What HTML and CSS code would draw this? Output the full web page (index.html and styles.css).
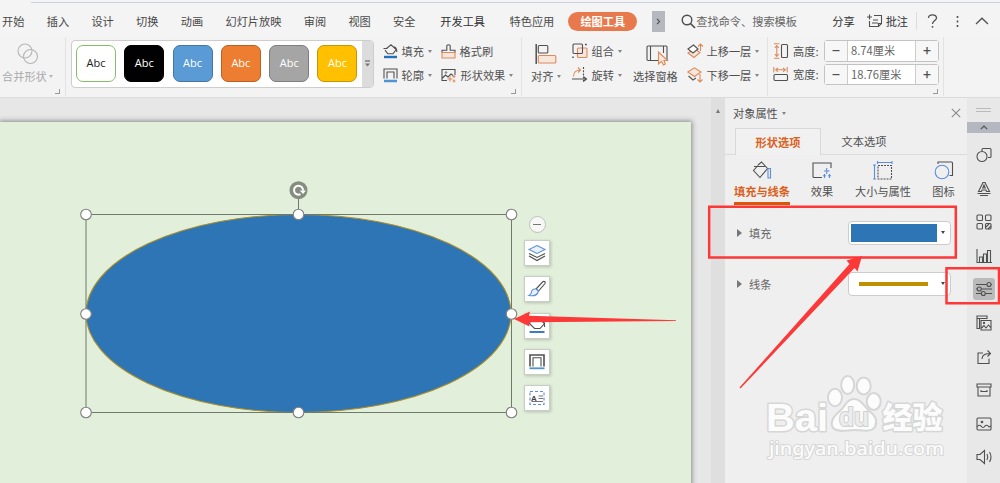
FILE: index.html
```
<!DOCTYPE html>
<html lang="zh-CN">
<head>
    <meta charset="UTF-8">
    <meta name="viewport" content="width=device-width, initial-scale=1.0">
    <title>绘图工具</title>
    <link rel="stylesheet" href="styles.css">
</head>
<body>
    <!-- Menu tabs -->
    <nav class="menu">
        <a>开始</a>
        <a>插入</a>
        <a>设计</a>
        <a>切换</a>
        <a>动画</a>
        <a>幻灯片放映</a>
        <a>审阅</a>
        <a>视图</a>
        <a>安全</a>
        <a class="dev strong">开发工具</a>
        <a class="special">特色应用</a>
        <a class="active">绘图工具</a>
        <span class="more"><svg width="5" height="7"><path d="M1 .8 3.6 3.5 1 6.2"/></svg></span>
        <div class="search">
            <svg width="15" height="15"><circle cx="6" cy="6" r="4.8" stroke-width="1.4"/><path d="M9.5 9.5 14 14" stroke-width="1.7"/></svg>
            <span>查找命令、搜索模板</span>
        </div>
        <a class="share strong">分享</a>
        <svg class="note-icon" width="16" height="14"><path d="M7 1.5H14.5V9.5L11.5 12.5H2.5V7M6 6H11M5 9H11M0 3H5M2.5 .5V5.5M11.5 12.5V9.5H14.5"/></svg>
        <a class="strong">批注</a>
        <i class="menu-line"></i>
        <svg class="help" width="11" height="14"><path d="M1.5 4C1.5-.3 9.5-.3 9.5 4 9.5 6.5 5.5 6.6 5.5 10" stroke-width="1.3"/><path d="M5.5 12V13.7" stroke-width="1.5"/></svg>
        <svg class="dots" width="3" height="13"><path d="M1.5 1V3M1.5 5.5V7.5M1.5 10V12" stroke-width="1.6"/></svg>
        <svg class="fold" width="14" height="8"><path d="M1 7 7 1.2 13 7" stroke-width="1.3"/></svg>
    </nav>

    <!-- Ribbon -->
    <div class="ribbon">
        <div class="group merge">
            <svg width="22" height="22"><circle cx="8" cy="8" r="7"/><circle cx="13.5" cy="13.5" r="7"/></svg>
            <span>合并形状<b class="caret"></b></span>
            <i class="corner"></i>
        </div>

        <div class="group styles">
            <div class="gallery">
                <div class="swatch outline">Abc</div>
                <div class="swatch black">Abc</div>
                <div class="swatch blue">Abc</div>
                <div class="swatch orange">Abc</div>
                <div class="swatch gray">Abc</div>
                <div class="swatch yellow">Abc</div>
                <div class="gallery-more"><svg width="5" height="8"><path d="M0 1H5" stroke-width="1"/><path class="solid" d="M0 3.5H5L2.5 6.5Z"/></svg></div>
            </div>
            <div class="tools">
                <div class="tool">
                    <svg width="15" height="15"><path d="M3.5 4.5 8 .8 13.2 5.5 10 9.8H4.8L2 6.2M.5 4.5H4.5M11 2.8Q14 4 13.8 8"/><path class="s-blue" d="M1 13H14" stroke-width="2.4"/></svg>
                    <span>填充<b class="caret"></b></span>
                </div>
                <div class="tool">
                    <svg width="15" height="15"><path d="M1 8.5V6.3H5.8V1.8Q5.8 .8 7.5 .8T9.2 1.8V6.3H14V8.5"/><path class="s-orange f-orange" d="M1 8.5H14V14H1Z"/></svg>
                    <span>格式刷</span>
                </div>
                <div class="tool">
                    <svg width="15" height="15"><path d="M1 10.5V1H14V10.5M4 10.5V4H11V10.5"/><path class="s-light" d="M1 13H14" stroke-width="2.5"/></svg>
                    <span>轮廓<b class="caret"></b></span>
                </div>
                <div class="tool">
                    <svg width="16" height="15"><path d="M6 12.5H1V1.5H14V7M1.5 10 4.5 7 7 9 10 6 12 7.5"/><circle cx="5" cy="4.5" r=".8" stroke-width=".8"/><path class="s-orange" d="M9 8.5V13.5M6.5 11H11.5M13 7V10M11.5 8.5H14.5M13 11.5V14.5M11.5 13H14.5"/></svg>
                    <span>形状效果<b class="caret"></b></span>
                </div>
            </div>
            <i class="corner"></i>
        </div>

        <div class="group arrange">
            <div class="big align">
                <svg width="22" height="21"><path d="M1.2 0V20" stroke-width="1.5"/><rect x="3.3" y="1.5" width="9.5" height="7.5" rx="1"/><rect class="s-orange f-orange" x="3.3" y="11.5" width="17.5" height="7.5" rx="1"/></svg>
                <span>对齐<b class="caret"></b></span>
            </div>
            <div class="stack">
                <div class="tool">
                    <svg width="16" height="16"><rect class="s-orange f-orange" x="5.5" y="5" width="9.5" height="9.5" rx="1"/><rect x="1" y="1" width="9.5" height="9.5" rx="1"/><path d="M1 13.5V15M13 1.5H14.8" stroke-width="1.5"/></svg>
                    <span>组合<b class="caret"></b></span>
                </div>
                <div class="tool">
                    <svg width="16" height="16"><path class="s-orange" d="M1.5 9.5C1.5 5 4 3 8.5 3M6 .5 8.5 3 6 5.5"/><path stroke-dasharray="2 1.2" d="M11.5 0V15.5"/><path d="M0 12H14.5M12 10 14.5 12 12 14"/></svg>
                    <span>旋转<b class="caret"></b></span>
                </div>
            </div>
            <div class="big pane">
                <svg width="23" height="22"><rect x="1" y="2" width="20" height="14.5" rx="1"/><path d="M4.5 2V16.5M17.5 2V9"/><path class="s-orange f-orange" d="M12.5 8V20L15.5 17.3 17.5 21 19.3 20 18 16.5H21.5Z"/></svg>
                <span>选择窗格</span>
            </div>
            <div class="stack layers">
                <div class="tool">
                    <svg width="16" height="16"><path class="s-orange f-orange" d="M1 10 8 6 13 9.5 7 14.5Z"/><path class="f-white" d="M1 6 6.5 2 11 6 6 10Z"/><path class="s-orange" d="M13.5 8V1M11 3.5 13.5 1 16 3.5"/></svg>
                    <span>上移一层<b class="caret"></b></span>
                </div>
                <div class="tool">
                    <svg width="16" height="16"><path d="M1.5 9 6 13 9 11"/><path class="s-orange f-orange" d="M.8 5 7.5 .8 14 5 7.5 9.5Z"/><path class="s-orange" d="M13 7V15M10.5 12.5 13 15 15.5 12.5"/></svg>
                    <span>下移一层<b class="caret"></b></span>
                </div>
            </div>
        </div>

        <div class="group size">
            <div class="size-row">
                <svg width="16" height="16"><path class="s-orange" d="M1 .8H6.5M1 15.2H6.5M3.8 3V13M1.8 5 3.8 2.7 5.8 5M1.8 11 3.8 13.3 5.8 11"/><rect x="8.5" y="1.5" width="6" height="13" rx="1"/></svg>
                <label>高度:</label>
                <div class="spinner"><em>−</em><span>8.74厘米</span><em>+</em></div>
            </div>
            <div class="size-row">
                <svg width="16" height="16"><path class="s-orange" d="M.8 1V6.5M14.2 1V6.5M3 3.8H12M5 1.8 2.7 3.8 5 5.8M10 1.8 12.3 3.8 10 5.8"/><rect x="1" y="8.5" width="13.5" height="6" rx="1"/></svg>
                <label>宽度:</label>
                <div class="spinner"><em>−</em><span>18.76厘米</span><em>+</em></div>
            </div>
            <i class="corner"></i>
        </div>
    </div>

    <!-- Workspace -->
    <main>
        <div class="canvas">
            <div class="slide">
                <svg class="shape" width="450" height="250">
                    <ellipse class="ellipse" cx="222.5" cy="143.5" rx="212.5" ry="99"/>
                    <path class="bounds" d="M222.5 20V44M10 44.5H435.5V242.5H10Z"/>
                    <g class="handles">
                        <circle cx="10" cy="44.5" r="5.3"/><circle cx="222.5" cy="44.5" r="5.3"/><circle cx="435.5" cy="44.5" r="5.3"/>
                        <circle cx="10" cy="144" r="5.3"/><circle cx="435.5" cy="144" r="5.3"/>
                        <circle cx="10" cy="242.5" r="5.3"/><circle cx="222.5" cy="242.5" r="5.3"/><circle cx="435.5" cy="242.5" r="5.3"/>
                    </g>
                    <circle class="rotate-bg" cx="222.5" cy="20.2" r="9"/>
                    <path class="rotate" d="M224.5 24.2A4.5 4.5 0 1 1 227 20.5"/>
                    <path class="rotate-tip" d="M223.7 20.5H230L227 24Z"/>
                </svg>
                <div class="float-bar">
                    <span class="collapse"></span>
                    <button><svg width="18" height="18"><path d="M1 12 9 16.5 17 12M1 9.5 9 13.5 17 9.5"/><path class="s-soft f-soft" d="M9 1.5 17 5.5 9 9.5 1 5.5Z"/></svg></button>
                    <button><svg width="18" height="18"><path d="M8 9 15 1.5Q18 1 17 3.5L10.5 11Z"/><path class="s-soft f-soft" d="M8 9Q4 8.5 3.5 12 3.3 14.5 1 15.5 9 17 10.5 11Z"/></svg></button>
                    <button><svg width="18" height="18"><path d="M6 1 2 5 1.5 6.5 6.5 11.5H12L16.5 6.5 11 1.5M14 4 16.5 6V10"/><path class="s-blue" d="M1.5 15H16.5" stroke-width="1.8"/></svg></button>
                    <button><svg width="18" height="18"><path d="M2 13.5V2H16V13.5" stroke-width="1.6"/><path d="M5 13.5V4.8H13V13.5"/><path class="s-light" d="M1.5 15.3H16.5" stroke-width="1.8"/></svg></button>
                    <button><svg width="18" height="18"><path class="s-soft" stroke-dasharray="3 2" d="M2 2.5H16V15.5H2Z"/><text x="3" y="11.5" class="letter">A</text><path d="M10.5 7H15M10.5 9.5H15M3.5 12.5H15" stroke-width=".8"/></svg></button>
                </div>
            </div>
        </div>
        <div class="scrollbar"><i></i></div>

        <!-- Object properties -->
        <section class="panel">
            <header>
                <span>对象属性<b class="caret"></b></span>
                <svg width="10" height="10"><path d="M.8 .8 9.2 9.2M9.2 .8 .8 9.2"/></svg>
            </header>
            <div class="tabs">
                <div class="tab current">形状选项</div>
                <div class="tab">文本选项</div>
            </div>
            <div class="kinds">
                <div class="kind chosen">
                    <svg width="20" height="19"><path d="M2 5.5H13M6 4 9.5 1 15.5 7.5 8 16.5 1.5 9.5 6 4.5"/><path class="s-soft" d="M16 7.5H18.5V17H16Z"/></svg>
                    <span>填充与线条</span>
                </div>
                <div class="kind">
                    <svg width="20" height="19"><path d="M10 16.5H2Q1 16.5 1 15.5V2H19V7"/><path class="s-soft" d="M12 10H17.5M14.7 7V13M11 14.8H14M12.5 13V17M16 14.8H19M17.5 13V17"/></svg>
                    <span>效果</span>
                </div>
                <div class="kind">
                    <svg width="20" height="19"><path class="s-soft" d="M4.5 1.5H19M4.5 0V3M19 0V3M1.5 4V18M0 4H3M0 18H3"/><path stroke-dasharray="2 1" d="M5 4.5H18.5V18H5Z"/></svg>
                    <span>大小与属性</span>
                </div>
                <div class="kind">
                    <svg width="20" height="19"><path d="M4 3V1H17.5Q18.5 1 18.5 2V14.5H15.5"/><circle class="s-soft" cx="8" cy="11" r="6.8"/></svg>
                    <span>图标</span>
                </div>
            </div>
            <div class="row"><i></i><span>填充</span><div class="picker"><b class="fill-color"></b><b class="caret dark"></b></div></div>
            <div class="row"><i></i><span>线条</span><div class="picker"><b class="line-color"></b><b class="caret dark"></b></div></div>
            <svg class="watermark" width="190" height="95">
                <ellipse cx="85.7" cy="25" rx="6.5" ry="9"/><ellipse cx="73" cy="37.5" rx="7" ry="8.8"/>
                <ellipse cx="101.7" cy="26" rx="7" ry="8.5"/><ellipse cx="111.7" cy="41.5" rx="7" ry="8.5"/>
                <path d="M92 39C98 39 101 44 106 50 113 55 116 61 113 67 109 73 99 70 92 70S76 73 71 68C67 61 73 55 80 49 84 44 86 39 92 39Z"/>
                <text x="4" y="70.5" class="wm-bai" textLength="62" lengthAdjust="spacingAndGlyphs">Bai</text>
                <text x="77" y="66" class="wm-du" textLength="30" lengthAdjust="spacingAndGlyphs">du</text>
                <text x="120.5" y="68" class="wm-cn">经验</text>
                <text x="7" y="94.5" class="wm-url" textLength="175" lengthAdjust="spacingAndGlyphs">jingyan.baidu.com</text>
            </svg>
        </section>

        <!-- Side toolbar -->
        <aside>
            <div class="grip"></div>
            <div class="up"><svg width="8" height="5"><path d="M.8 4.2 4 1 7.2 4.2"/></svg></div>
            <span><svg width="16" height="16"><path d="M6 4V2.5Q6 1.5 7 1.5H14Q15 1.5 15 2.5V9.5Q15 10.5 14 10.5H12"/><circle cx="6" cy="9.5" r="5"/></svg></span>
            <span><svg width="16" height="16"><path d="M2.5 10.5 7 1.5H9L13.5 10.5H10.5L10 9H6L5.5 10.5ZM6.8 7H9.2L8 4ZM1.5 12.5H14.5M4 14.5H12"/></svg></span>
            <span><svg width="16" height="16"><rect x="1" y="1" width="5.5" height="5.5" rx="1"/><rect x="9.5" y="1" width="5.5" height="5.5" rx="1"/><rect x="1" y="9.5" width="5.5" height="5.5" rx="1"/><rect x="9.5" y="9.5" width="5.5" height="5.5" rx="1"/><path d="M10 13 13 10M12 15 15 12"/></svg></span>
            <span><svg width="16" height="16"><path d="M1 1V14.5H16M3.5 14V9H6.5V14M7.5 14V6H10.5V14M11.5 14V2.5H14.5V14"/></svg></span>
            <span class="on"><svg width="16" height="16"><path d="M0 3.5H11M15 3.5H16M0 8H1M5.5 8H16M0 12.5H5M9.5 12.5H16"/><circle cx="13" cy="3.5" r="2"/><circle cx="3.3" cy="8" r="2"/><circle cx="7.3" cy="12.5" r="2"/></svg></span>
            <span><svg width="16" height="16"><path d="M4 13.5H1V1H11V4M1 3.5H11M3.5 3.5V13.5M5 5.5H15V15H5ZM5.5 13 8 10.5 10 13 12.5 10 15 13"/><circle cx="8" cy="8" r=".6"/></svg></span>
            <span><svg width="16" height="16"><path d="M7 4H2V14.5H13V9.5M6 10C6 6 9 4.5 14.5 4.5M11.5 1.5 14.5 4.5 11.5 7.5"/></svg></span>
            <span><svg width="16" height="16"><path d="M1 2H15V5H1ZM2 5V14H14V5M5 8V9.5H11V8"/></svg></span>
            <span><svg width="16" height="16"><rect x="1" y="2" width="14" height="12" rx="1"/><path d="M1 11Q3 8 5 10 7 13 9 10 11 8 13 11L15 10"/><circle cx="6" cy="6" r=".8"/></svg></span>
            <span><svg width="16" height="16"><path d="M1 5.5H4L8.5 1.5V14.5L4 10.5H1ZM11 5Q12.5 8 11 11M13.5 3Q16.5 8 13.5 13"/></svg></span>
        </aside>
    </main>

    <!-- Callouts drawn over the window -->
    <svg class="callouts" width="1000" height="483">
        <path class="box" d="M709.2 206.7H955.8V257.6H709.2ZM946.5 268.3H999V303.3H946.5Z"/>
        <path class="arrow" d="M514 319 530 311.5 529 315.8 676 320.2V321L529 322.3 529.5 326.5Z"/>
        <path class="arrow" d="M862 256 857.5 271.5 854.5 268 740.5 388.5 739.5 387.5 849.5 264 846.5 260.5Z"/>
    </svg>
</body>
</html>
```
FILE: styles.css
```
* {
    box-sizing: border-box;
}

body {
    margin: 0;
    width: 1000px;
    height: 483px;
    overflow: hidden;
    position: relative;
    font-family: "Noto Sans CJK SC", sans-serif;
    font-size: 11.2px;
    line-height: 16px;
    color: #505050;
    background-color: #f3f3f3;
}

svg {
    display: block;
    flex: none;
    overflow: visible;
    fill: none;
    stroke: #505050;
    stroke-width: 1.1;
}

i, em, b {
    font-style: normal;
    font-weight: normal;
}

.s-orange { stroke: #dc8a5c; }
.f-orange { fill: #f8e6dc; }
.s-blue { stroke: #2470b8; }
.s-light { stroke: #4f93d2; }
.s-soft { stroke: #5b8fdb; }
.f-soft { fill: #e9f1fd; }
.f-white { fill: #fff; }
.solid { fill: #777; stroke: none; }

.caret {
    display: inline-block;
    margin-left: 4px;
    vertical-align: 3px;
    border: 2.5px solid transparent;
    border-top: 3px solid #858585;
    border-bottom: 0;
}

/* Menu */
.menu {
    display: flex;
    align-items: center;
    height: 37px;
    padding: 5px 0 0 2px;
    white-space: nowrap;
    background: linear-gradient(#cbd3e2, #cbd3e2) 31px 2px / 969px 1px no-repeat, #f4f4f4;
}

.menu a {
    margin-right: 22.3px;
    color: #484848;
}

.menu .strong {
    color: #303030;
}

.menu .dev {
    margin-left: 2.5px;
    margin-right: 24.5px;
}

.menu .special {
    margin-right: 14px;
}

.menu .active {
    width: 69px;
    height: 19px;
    margin-right: 15px;
    border-radius: 10px;
    line-height: 18px;
    text-align: center;
    font-weight: bold;
    color: #fff;
    background-color: #e8794c;
}

.more {
    display: flex;
    align-items: center;
    justify-content: center;
    width: 13px;
    height: 21px;
    background-color: #b5b9bf;
}

.search {
    display: flex;
    align-items: center;
    width: 150px;
    padding-left: 16px;
    color: #666;
}

.menu .share {
    margin: 0 12px 0 17px;
}

.note-icon {
    margin-right: 3px;
}

.menu .note-icon + a {
    margin-right: 8px;
}

.menu-line {
    width: 1px;
    height: 18px;
    margin-right: 10px;
    background-color: #ddd;
}

.help {
    margin-right: 18px;
}

.dots {
    margin-right: 16px;
}

/* Ribbon */
.ribbon {
    display: flex;
    height: 61px;
    border-bottom: 1px solid #dadada;
    white-space: nowrap;
}

.group {
    position: relative;
    display: flex;
    height: 59px;
    border-right: 1px solid #e2e2e2;
}

.corner {
    position: absolute;
    right: 5px;
    bottom: 2px;
    width: 5px;
    height: 5px;
    border: solid #999;
    border-width: 0 1px 1px 0;
}

.merge {
    flex-direction: column;
    width: 66px;
    padding: 6px 0 0 2px;
    color: #aaa;
}

.merge svg {
    margin: 0 0 3px 15px;
    stroke: #b5b5b5;
}

.merge .caret {
    margin-left: 2px;
    border-top-color: #b5b5b5;
}

.styles {
    width: 456px;
    padding: 3px 0 0 5px;
}

.gallery {
    display: flex;
    gap: 8.3px;
    width: 303px;
    height: 48px;
    padding: 4px 0 0 4px;
    border: 1px solid #cdcdcd;
    border-radius: 4px;
    background-color: #fff;
    overflow: hidden;
}

.swatch {
    flex: none;
    width: 40px;
    height: 37px;
    border: 1.5px solid #000;
    border-radius: 7px;
    font: 11px/34px "Open Sans", sans-serif;
    text-align: center;
    color: #fff;
}

.outline { color: #222; border-color: #85be68; }
.black { background-color: #000; }
.blue { background-color: #5b9bd5; border-color: #4577a5; }
.orange { background-color: #ed7d31; border-color: #b86125; }
.gray { background-color: #a5a5a5; border-color: #7e7e7e; }
.yellow { background-color: #ffc000; border-color: #c49606; }

.gallery-more {
    display: flex;
    align-items: center;
    justify-content: center;
    flex: none;
    width: 12px;
    height: 48px;
    margin: -5px 0 0 -4px;
    background-color: #dcdcdc;
}

.tools {
    display: grid;
    grid-template-columns: 58px 80px;
    grid-template-rows: 22px 22px;
    row-gap: 2px;
    margin-left: 9px;
}

.tool {
    display: flex;
    align-items: center;
    gap: 3.5px;
    height: 22px;
}

.arrange {
    width: 246px;
    padding-top: 3px;
}

.stack {
    display: grid;
    grid-template-rows: 22px 22px;
    row-gap: 2px;
    width: 61px;
}

.layers {
    width: 76px;
    margin-left: 3px;
}

.big {
    padding-top: 4px;
}

.big svg {
    margin-bottom: 3px;
}

.align {
    width: 41px;
    margin-left: 9px;
}

.align svg {
    margin-left: 4px;
}

.pane {
    width: 51px;
}

.pane svg {
    margin: 0 0 2px 13px;
}

.size {
    flex-direction: column;
    gap: 2px;
    width: 176px;
    padding: 3px 0 0 5px;
}

.size-row {
    display: flex;
    align-items: center;
}

.size-row label {
    width: 35px;
    padding-left: 4px;
}

.spinner {
    display: flex;
    width: 115px;
    height: 21.5px;
    border: 1px solid #c3c3c3;
    border-radius: 3px;
    line-height: 18px;
    background-color: #fff;
}

.spinner em {
    width: 22px;
    text-align: center;
    font-size: 14px;
    font-weight: 500;
    background-color: #f7f7f7;
}

.spinner span {
    flex: 1;
    padding-left: 3px;
    border: solid #ccc;
    border-width: 0 1px;
    color: #666;
}

/* Workspace */
main {
    display: flex;
    height: 385px;
}

.canvas {
    width: 711px;
    padding-top: 24px;
    overflow: hidden;
    background-color: #e7e7e7;
}

.slide {
    position: relative;
    width: 691px;
    height: 380px;
    background-color: #e2efda;
    box-shadow: 0 0 5px 1px #888;
}

.shape {
    position: absolute;
    left: 76px;
    top: 48px;
}

.ellipse { fill: #2e75b6; stroke: #ad8e24; }
.bounds { stroke: #707a6b; stroke-width: 1; }
.handles { fill: #fff; stroke: #808080; }
.rotate-bg { fill: #858d80; stroke: none; }
.rotate { stroke: #fff; stroke-width: 2; }
.rotate-tip { fill: #fff; stroke: none; }

.float-bar {
    position: absolute;
    left: 524px;
    top: 94px;
    display: flex;
    flex-direction: column;
    align-items: center;
    gap: 10.2px;
}

.float-bar button {
    width: 26px;
    height: 26px;
    padding: 3px;
    border: 1px solid #c8cec5;
    background-color: #fff;
    box-shadow: 1px 1px 3px rgba(0, 0, 0, 0.2);
}

.collapse {
    display: flex;
    align-items: center;
    justify-content: center;
    width: 17px;
    height: 17px;
    margin-bottom: -3px;
    border: 1px solid #c0c0c0;
    border-radius: 50%;
    background-color: #f7f7f5;
}

.collapse::before {
    content: "";
    width: 8px;
    height: 1.5px;
    background-color: #777;
}

.letter {
    font: bold 8px "Liberation Sans", sans-serif;
    fill: #444;
    stroke: none;
}

.scrollbar {
    width: 14px;
    padding: 11px 0 0 5px;
    background-color: #dfdfdf;
}

.scrollbar i {
    display: block;
    width: 0;
    border: 2.5px solid transparent;
    border-top: 0;
    border-bottom: 4px solid #777;
}

/* Properties panel */
.panel {
    position: relative;
    width: 242px;
    background-color: #efefef;
}

.panel header {
    display: flex;
    align-items: center;
    justify-content: space-between;
    height: 30px;
    padding: 0 6px 1px 8px;
}

.panel header svg {
    stroke: #888;
}

.tabs {
    display: flex;
    height: 27px;
    padding-left: 10px;
    background: linear-gradient(#dcdcdc, #dcdcdc) 0 26px / 100% 1px no-repeat;
}

.tab {
    width: 86px;
    line-height: 27px;
    text-align: center;
}

.current {
    border: 1px solid #d8d8d8;
    border-bottom: 0;
    background-color: #f1f1f1;
    font-weight: bold;
    color: #dc601c;
}

.kinds {
    display: grid;
    grid-template-columns: 74px 46px 76px 45px;
    height: 51px;
    padding-top: 6px;
    white-space: nowrap;
}

.kind {
    display: flex;
    flex-direction: column;
    align-items: center;
    gap: 3px;
}

.chosen span {
    padding-bottom: 3px;
    border-bottom: 3px solid #dc5608;
    font-weight: bold;
    color: #dc601c;
}

.row {
    display: flex;
    align-items: center;
    height: 51.2px;
    padding: 2px 16px 0 12px;
    color: #666;
}

.row i {
    margin-right: 7px;
    border: 4px solid transparent;
    border-left: 5px solid #777;
    border-right: 0;
}

.picker {
    display: flex;
    align-items: center;
    width: 103px;
    height: 24px;
    margin-left: auto;
    padding-left: 2px;
    border: 1px solid #ccc;
    border-radius: 4px;
    background-color: #fff;
}

.fill-color {
    width: 86px;
    height: 18px;
    background-color: #2e75b6;
}

.line-color {
    width: 69px;
    height: 4px;
    margin: 0 9px 0 8px;
    background-color: #bf9000;
}

.dark {
    border-top-color: #444;
}

.watermark {
    position: absolute;
    left: 37px;
    top: 262px;
    fill: #fcfcfc;
    stroke: #d6d6d6;
    stroke-width: 2;
}

.watermark text {
    paint-order: stroke;
    stroke-linejoin: round;
}

.watermark .wm-bai { font: bold 39px "Liberation Sans", sans-serif; stroke-width: 3; }
.watermark .wm-du { font: bold 25px "Liberation Sans", sans-serif; fill: #ececec; stroke: #cfcfcf; }
.watermark .wm-cn { font: 900 30px "Noto Sans CJK SC", sans-serif; stroke-width: 3; }
.watermark .wm-url { font: 500 18px "Noto Sans", sans-serif; }

/* Side toolbar */
aside {
    display: flex;
    flex-direction: column;
    align-items: center;
    width: 33px;
    background-color: #e8e8e8;
}

.grip {
    width: 15px;
    height: 4px;
    margin: 10px 0;
    border: solid #bbb;
    border-width: 1px 0;
}

.up {
    display: flex;
    align-items: center;
    justify-content: center;
    width: 33px;
    height: 11px;
    margin-bottom: 11px;
    background-color: #b4b7bf;
}

aside span {
    display: flex;
    align-items: center;
    justify-content: center;
    flex: none;
    width: 22px;
    height: 22px;
    margin-bottom: 11.6px;
    border-radius: 3px;
}

.on {
    background-color: #bababa;
}

.callouts {
    position: absolute;
    left: 0;
    top: 0;
}

.box { stroke: #fc3838; stroke-width: 2.5; }
.arrow { fill: #fc3838; stroke: none; }
```
